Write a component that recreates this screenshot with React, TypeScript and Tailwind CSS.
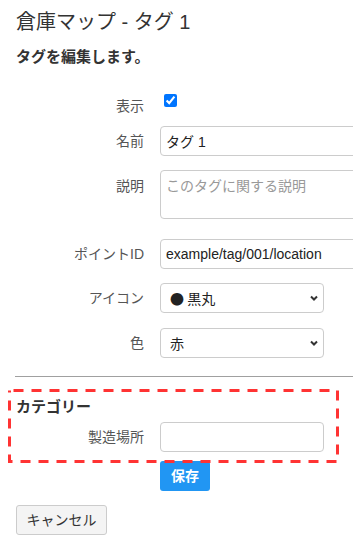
import React from "react";

const Chevron = () => (
  <svg
    className="pointer-events-none absolute right-[6px] top-1/2 -translate-y-1/2"
    width="8"
    height="6"
    viewBox="0 0 8 6"
  >
    <path d="M1 1.5 L4 4.5 L7 1.5" fill="none" stroke="#333" strokeWidth="2" />
  </svg>
);

const Label = ({ text, className = "" }: { text: string; className?: string }) => (
  <label className={`w-[128px] shrink-0 text-right text-[14px] leading-[20px] text-[#555] ${className}`}>
    {text}
  </label>
);

const selectCls =
  "block h-[30px] w-[164px] appearance-none rounded-[4px] border border-[#ccc] bg-white pl-[9px] text-[14px] text-[#222] outline-none font-['Noto_Sans_CJK_JP',sans-serif]";

const App = () => {
  return (
    <div
      className="w-[353px] h-[548px] overflow-hidden bg-white text-[#333]"
      style={{ fontFamily: '"Liberation Sans", "Noto Sans CJK JP", sans-serif' }}
    >
      <div className="px-4 pt-[10px]">
        <h1 className="text-[20px] leading-[24px] font-normal">倉庫マップ - タグ 1</h1>
        <h2 className="mt-[13px] text-[15px] leading-[20px] font-bold">タグを編集します。</h2>

        <form className="w-[400px]">
          {/* 表示 */}
          <div className="mt-[27px] flex items-start">
            <Label text="表示" className="pt-[2px]" />
            <input type="checkbox" defaultChecked className="ml-[20px] m-0 h-[13px] w-[13px] accent-[#0075ff]" />
          </div>

          {/* 名前 */}
          <div className="mt-[10px] flex items-center">
            <Label text="名前" />
            <input
              defaultValue="タグ 1"
              className="ml-[16px] h-[30px] w-[220px] rounded-[4px] border border-[#ccc] pl-[5px] text-[14px] text-[#222] outline-none"
            />
          </div>

          {/* 説明 */}
          <div className="mt-[14px] flex items-start">
            <Label text="説明" className="pt-[6px]" />
            <textarea
              placeholder="このタグに関する説明"
              className="ml-[16px] block h-[49px] w-[220px] resize-none rounded-[4px] border border-[#ccc] pl-[5px] pt-[5px] text-[14px] leading-[20px] placeholder:text-[#999] outline-none"
            />
          </div>

          {/* ポイントID */}
          <div className="mt-[20px] flex items-center">
            <Label text="ポイントID" />
            <input
              defaultValue="example/tag/001/location"
              className="ml-[16px] h-[30px] w-[220px] rounded-[4px] border border-[#ccc] pl-[5px] text-[14px] text-[#222] outline-none"
            />
          </div>

          {/* アイコン */}
          <div className="mt-[14px] flex items-center">
            <Label text="アイコン" />
            <div className="relative ml-[16px]">
              <select className={selectCls}>
                <option>● 黒丸</option>
              </select>
              <Chevron />
            </div>
          </div>

          {/* 色 */}
          <div className="mt-[15px] flex items-center">
            <Label text="色" />
            <div className="relative ml-[16px]">
              <select className={selectCls}>
                <option>赤</option>
              </select>
              <Chevron />
            </div>
          </div>

          <hr className="mt-[18px] -ml-px border-t border-[#a0a0a0]" />

          {/* カテゴリー */}
          <div className="relative mt-[13px]">
            <svg
              className="pointer-events-none absolute left-[-8px] top-[-1px]"
              width="331"
              height="74"
              viewBox="0 0 331 74"
            >
              <rect
                x="1.5"
                y="1.5"
                width="328"
                height="71"
                fill="none"
                stroke="#ff3333"
                strokeWidth="3"
                strokeDasharray="10 8"
                strokeDashoffset="-4"
              />
            </svg>
            <h3 className="pt-[7px] text-[15px] leading-[20px] font-bold">カテゴリー</h3>
            <div className="mt-[5px] flex items-center">
              <Label text="製造場所" />
              <input className="ml-[16px] h-[30px] w-[164px] rounded-[4px] border border-[#ccc] pl-[5px] text-[14px] outline-none" />
            </div>
          </div>

          <div className="mt-[9px] pl-[144px]">
            <button
              type="button"
              className="h-[30px] w-[50px] rounded-[3px] bg-[#2196f3] text-[14px] font-bold text-white"
            >
              保存
            </button>
          </div>

          <button
            type="button"
            className="mt-[14px] h-[30px] w-[91px] rounded-[3px] border border-[#ccc] bg-[#f4f4f4] text-[14px] text-[#333]"
          >
            キャンセル
          </button>
        </form>
      </div>
    </div>
  );
};

export default App;
